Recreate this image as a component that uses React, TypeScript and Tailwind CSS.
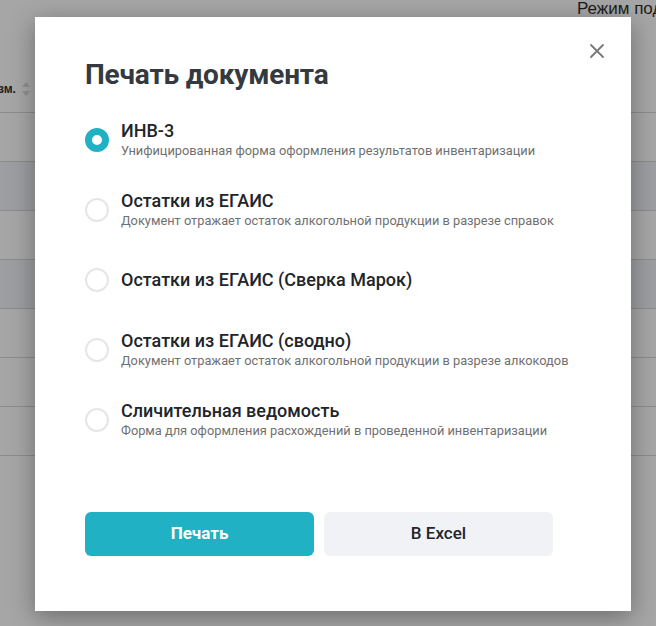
import React, { useState } from 'react';

const options = [
  { id: 'inv3', title: 'ИНВ-3', desc: 'Унифицированная форма оформления результатов инвентаризации' },
  { id: 'egais', title: 'Остатки из ЕГАИС', desc: 'Документ отражает остаток алкогольной продукции в разрезе справок' },
  { id: 'marks', title: 'Остатки из ЕГАИС (Сверка Марок)', desc: '' },
  { id: 'summary', title: 'Остатки из ЕГАИС (сводно)', desc: 'Документ отражает остаток алкогольной продукции в разрезе алкокодов' },
  { id: 'compare', title: 'Сличительная ведомость', desc: 'Форма для оформления расхождений в проведенной инвентаризации' },
];

const rows = ['bg-[#a6a6a6]', 'bg-[#9d9ea1]', 'bg-[#a6a6a6]', 'bg-[#9d9ea1]', 'bg-[#a6a6a6]', 'bg-[#a6a6a6]', 'bg-[#a6a6a6]'];

export default function App() {
  const [selected, setSelected] = useState('inv3');

  return (
    <div className="relative w-[656px] h-[626px] overflow-hidden bg-[#a6a6a6] font-['Roboto',sans-serif]">
      {/* page behind the dialog */}
      <div className="flex flex-col">
        <div className="h-[65px] flex justify-start pl-[577px] pt-[0px]">
          <span className="text-[17px] leading-[17px] text-[#1c1c1c] whitespace-nowrap font-['Liberation_Sans',sans-serif]">
            Режим подсчёта
          </span>
        </div>
        <div className="h-[48px] flex items-center border-b border-[#8c8c8c]">
          <span className="text-[12px] font-bold text-[#1e1e1e] font-['Liberation_Sans',sans-serif] -ml-[2px]">зм.</span>
          <svg className="ml-[6px]" width="8" height="14" viewBox="0 0 8 14" fill="#909090">
            <path d="M4 0L8 5H0Z" />
            <path d="M4 14L8 9H0Z" />
          </svg>
        </div>
        {rows.map((cls, i) => (
          <div key={i} className={`h-[49px] border-b border-[#8c8c8c] ${cls}`} />
        ))}
      </div>

      {/* dialog overlay */}
      <div className="absolute left-[35px] top-[17px] w-[596px] h-[594px] bg-white shadow-[0_6px_24px_rgba(0,0,0,0.35)] flex flex-col pl-[50px] pr-[40px] pt-[42px]">
        <button className="absolute right-[26px] top-[26px] w-[16px] h-[16px] flex items-center justify-center text-[#777]">
          <svg width="16" height="16" viewBox="0 0 16 16" fill="none" stroke="currentColor" strokeWidth="1.8" strokeLinecap="round">
            <path d="M2 2L14 14M14 2L2 14" />
          </svg>
        </button>

        <h2 className="text-[28px] leading-[32px] font-bold text-[#343a40] tracking-[-0.2px] whitespace-nowrap">Печать документа</h2>

        <div className="flex flex-col mt-[23px]">
          {options.map((o) => {
            const active = selected === o.id;
            return (
              <div
                key={o.id}
                onClick={() => setSelected(o.id)}
                className="h-[70px] flex items-start cursor-pointer"
              >
                <div className="h-[52px] flex items-center gap-[12px]">
                  <span
                    className={
                      active
                        ? 'w-[24px] h-[24px] rounded-full border-[7px] border-[#20b2c4] bg-white shrink-0'
                        : 'w-[24px] h-[24px] rounded-full border-2 border-[#e6e6e6] bg-white shrink-0'
                    }
                  />
                  <div className="flex flex-col">
                    <span className="text-[18px] leading-[22px] font-medium text-[#212529] whitespace-nowrap">{o.title}</span>
                    {o.desc && <span className="text-[12.8px] leading-[18px] text-[#707070] whitespace-nowrap">{o.desc}</span>}
                  </div>
                </div>
              </div>
            );
          })}
        </div>

        <div className="flex gap-[10px] mt-[48px]">
          <button className="w-[229px] h-[44px] rounded-[6px] bg-[#20b2c4] text-white text-[17px] font-bold">Печать</button>
          <button className="w-[229px] h-[44px] rounded-[6px] bg-[#f1f2f5] text-[#212529] text-[17px] font-medium">B Excel</button>
        </div>
      </div>
    </div>
  );
}
